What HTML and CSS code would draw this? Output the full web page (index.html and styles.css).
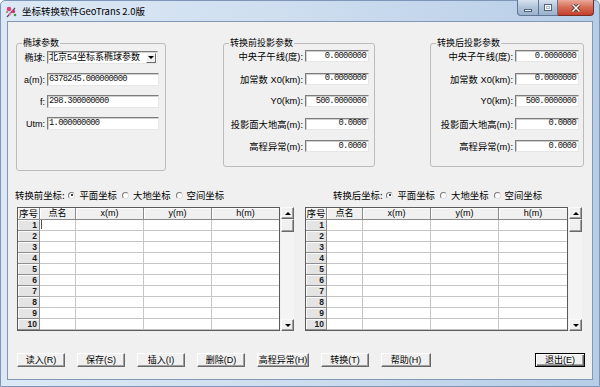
FILE: index.html
```html
<!DOCTYPE html>
<html lang="zh-CN">
<head>
<meta charset="utf-8">
<title>坐标转换软件GeoTrans 2.0版</title>
<link rel="stylesheet" href="styles.css">
</head>
<body>
<div class="window">
  <div class="titlebar">
    <svg class="appicon" width="13" height="13" viewBox="0 0 13 13">
      <path d="M2 12 L10 3" stroke="#5a4a5a" stroke-width="1.2"/>
      <circle cx="4" cy="4" r="2.3" fill="#e2407c"/>
      <circle cx="8.5" cy="6.5" r="1.7" fill="#d4306c"/>
      <circle cx="5" cy="9" r="1.4" fill="#f27aa8"/>
      <circle cx="10" cy="10" r="1.3" fill="#3d9a44"/>
      <circle cx="2" cy="7" r="1" fill="#4aa850"/>
    </svg>
    <span class="title">坐标转换软件GeoTrans 2.0版</span>
    <div class="caption">
      <div class="cbtn min"><span class="g-min"></span></div>
      <div class="cbtn max"><span class="g-max"></span></div>
      <div class="cbtn close">
        <svg width="10" height="8" viewBox="0 0 10 8"><path d="M1.5 0.5 L8.5 7.5 M8.5 0.5 L1.5 7.5" stroke="#4a1a14" stroke-width="3"/><path d="M1.5 0.5 L8.5 7.5 M8.5 0.5 L1.5 7.5" stroke="#fff" stroke-width="1.6"/></svg>
      </div>
    </div>
  </div>

  <div class="client">
    <div class="groups">
      <fieldset class="group g1">
        <legend>椭球参数</legend>
        <div class="rows1">
          <div class="row1"><span class="lbl1">椭球:</span><div class="combo"><span class="ctext">北京54坐标系椭球参数</span><span class="drop"><i class="tri-down"></i></span></div></div>
          <div class="row1"><span class="lbl1">a(m):</span><div class="field wide">6378245.000000000</div></div>
          <div class="row1"><span class="lbl1">f:</span><div class="field wide">298.300000000</div></div>
          <div class="row1"><span class="lbl1">Utm:</span><div class="field wide">1.000000000</div></div>
        </div>
      </fieldset>

      <fieldset class="group g2">
        <legend>转换前投影参数</legend>
        <div class="rows2">
          <div class="row2"><span class="lbl2">中央子午线(度):</span><div class="field num">0.0000000</div></div>
          <div class="row2"><span class="lbl2">加常数 X0(km):</span><div class="field num">0.0000000</div></div>
          <div class="row2"><span class="lbl2">Y0(km):</span><div class="field num">500.0000000</div></div>
          <div class="row2"><span class="lbl2">投影面大地高(m):</span><div class="field num">0.0000</div></div>
          <div class="row2"><span class="lbl2">高程异常(m):</span><div class="field num">0.0000</div></div>
        </div>
      </fieldset>

      <fieldset class="group g3">
        <legend>转换后投影参数</legend>
        <div class="rows2">
          <div class="row2"><span class="lbl2">中央子午线(度):</span><div class="field num">0.0000000</div></div>
          <div class="row2"><span class="lbl2">加常数 X0(km):</span><div class="field num">0.0000000</div></div>
          <div class="row2"><span class="lbl2">Y0(km):</span><div class="field num">500.0000000</div></div>
          <div class="row2"><span class="lbl2">投影面大地高(m):</span><div class="field num">0.0000</div></div>
          <div class="row2"><span class="lbl2">高程异常(m):</span><div class="field num">0.0000</div></div>
        </div>
      </fieldset>
    </div>

    <div class="coords">
      <div class="panel pl">
        <div class="radios">
          <span class="rcap">转换前坐标:</span>
          <span class="radio"><i class="dot on"></i>平面坐标</span>
          <span class="radio"><i class="dot"></i>大地坐标</span>
          <span class="radio"><i class="dot"></i>空间坐标</span>
        </div>
        <div class="gridbox">
          <div class="grid gl">
            <div class="h">序号</div><div class="h">点名</div><div class="h">x(m)</div><div class="h">y(m)</div><div class="h">h(m)</div>
            <div class="rh">1</div><div class="d"><b class="caret"></b></div><div class="d"></div><div class="d"></div><div class="d"></div>
            <div class="rh">2</div><div class="d"></div><div class="d"></div><div class="d"></div><div class="d"></div>
            <div class="rh">3</div><div class="d"></div><div class="d"></div><div class="d"></div><div class="d"></div>
            <div class="rh">4</div><div class="d"></div><div class="d"></div><div class="d"></div><div class="d"></div>
            <div class="rh">5</div><div class="d"></div><div class="d"></div><div class="d"></div><div class="d"></div>
            <div class="rh">6</div><div class="d"></div><div class="d"></div><div class="d"></div><div class="d"></div>
            <div class="rh">7</div><div class="d"></div><div class="d"></div><div class="d"></div><div class="d"></div>
            <div class="rh">8</div><div class="d"></div><div class="d"></div><div class="d"></div><div class="d"></div>
            <div class="rh">9</div><div class="d"></div><div class="d"></div><div class="d"></div><div class="d"></div>
            <div class="rh">10</div><div class="d"></div><div class="d"></div><div class="d"></div><div class="d"></div>
          </div>
          <div class="vscroll">
            <div class="sbtn"><i class="tri-up"></i></div>
            <div class="thumb"></div>
            <div class="track"></div>
            <div class="sbtn"><i class="tri-down"></i></div>
          </div>
        </div>
      </div>

      <div class="panel pr">
        <div class="radios rr">
          <span class="rcap">转换后坐标:</span>
          <span class="radio"><i class="dot on"></i>平面坐标</span>
          <span class="radio"><i class="dot"></i>大地坐标</span>
          <span class="radio"><i class="dot"></i>空间坐标</span>
        </div>
        <div class="gridbox">
          <div class="grid gr">
            <div class="h">序号</div><div class="h">点名</div><div class="h">x(m)</div><div class="h">y(m)</div><div class="h">h(m)</div>
            <div class="rh">1</div><div class="d"></div><div class="d"></div><div class="d"></div><div class="d"></div>
            <div class="rh">2</div><div class="d"></div><div class="d"></div><div class="d"></div><div class="d"></div>
            <div class="rh">3</div><div class="d"></div><div class="d"></div><div class="d"></div><div class="d"></div>
            <div class="rh">4</div><div class="d"></div><div class="d"></div><div class="d"></div><div class="d"></div>
            <div class="rh">5</div><div class="d"></div><div class="d"></div><div class="d"></div><div class="d"></div>
            <div class="rh">6</div><div class="d"></div><div class="d"></div><div class="d"></div><div class="d"></div>
            <div class="rh">7</div><div class="d"></div><div class="d"></div><div class="d"></div><div class="d"></div>
            <div class="rh">8</div><div class="d"></div><div class="d"></div><div class="d"></div><div class="d"></div>
            <div class="rh">9</div><div class="d"></div><div class="d"></div><div class="d"></div><div class="d"></div>
            <div class="rh">10</div><div class="d"></div><div class="d"></div><div class="d"></div><div class="d"></div>
          </div>
          <div class="vscroll">
            <div class="sbtn"><i class="tri-up"></i></div>
            <div class="thumb"></div>
            <div class="track"></div>
            <div class="sbtn"><i class="tri-down"></i></div>
          </div>
        </div>
      </div>
    </div>

    <div class="buttons">
      <div class="btn">读入(R)</div>
      <div class="btn">保存(S)</div>
      <div class="btn">插入(I)</div>
      <div class="btn">删除(D)</div>
      <div class="btn b5">高程异常(H)</div>
      <div class="btn">转换(T)</div>
      <div class="btn b7">帮助(H)</div>
      <div class="btn def">退出(E)</div>
    </div>
  </div>
</div>
</body>
</html>
```

FILE: styles.css
```css
* { box-sizing: border-box; }
html, body { margin: 0; padding: 0; }
body {
  width: 600px;
  height: 387px;
  overflow: hidden;
  background: #ffffff;
  font-family: "Liberation Sans", "Noto Sans CJK SC", sans-serif;
  font-size: 9px;
  color: #000;
}

.window {
  width: 600px;
  height: 387px;
  display: flex;
  flex-direction: column;
  border: 1px solid #7d96b8;
  border-radius: 5px 5px 0 0;
  background: linear-gradient(90deg, #dce8f5 0%, #cfdff0 45%, #b7cde7 100%);
}

/* ---------- title bar ---------- */
.titlebar {
  height: 20px;
  display: flex;
  align-items: center;
  padding-left: 4px;
}
.appicon { flex: none; margin-top: 1px; }
.title {
  margin-left: 4px;
  font-family: "Noto Sans CJK SC", sans-serif;
  font-size: 9.5px;
  line-height: 12px;
  color: #000;
}
.caption {
  display: flex;
  margin-left: auto;
  margin-right: 5px;
  align-self: flex-start;
  margin-top: -1px;
}
.cbtn {
  height: 16px;
  display: flex;
  align-items: center;
  justify-content: center;
  border: 1px solid #5f7695;
  border-top: 0;
}
.min {
  width: 21px;
  border-right: 0;
  border-radius: 0 0 0 4px;
  background: linear-gradient(#d6e2ef, #b1c3da 50%, #9cb1cc);
}
.max {
  width: 20px;
  background: linear-gradient(#d6e2ef, #b1c3da 50%, #9cb1cc);
}
.close {
  width: 36px;
  border-left: 0;
  border-color: #7b2c22;
  border-radius: 0 0 4px 0;
  background: linear-gradient(#eaa99b, #d66a54 50%, #c2402d);
}
.g-min {
  width: 8px;
  height: 3px;
  margin-top: 5px;
  background: #fff;
  border: 1px solid #4f627d;
}
.g-max {
  width: 8px;
  height: 7px;
  border: 1px solid #4f627d;
  background: #fff;
  box-shadow: inset 0 0 0 1px #fff, inset 0 0 0 2px #a9bbd3;
}

/* ---------- client ---------- */
.client {
  flex: 1;
  margin: 0 6px 6px 6px;
  border: 1px solid #8197b3;
  background: #f0f0f0;
  display: flex;
  flex-direction: column;
}

.groups {
  display: flex;
  align-items: flex-start;
  padding: 15px 0 0 8px;
}
.group {
  margin: 0;
  padding: 0;
  min-width: 0;
  border: 1px solid #bcbcbc;
  border-radius: 3px;
}
.group legend {
  margin-left: 5px;
  padding: 0 1px;
  line-height: 12px;
  font-size: 9px;
}
.g1 { width: 150px; height: 134px; }
.g2 { width: 152px; height: 130px; margin-left: 57px; }
.g3 { width: 154px; height: 130px; margin-left: 55px; }

.rows1 {
  display: flex;
  flex-direction: column;
  gap: 9px;
  padding-top: 2px;
}
.row1 {
  display: flex;
  align-items: center;
  height: 13px;
}
.lbl1 {
  width: 28px;
  margin-right: 2px;
  text-align: right;
  white-space: nowrap;
}

.rows2 {
  display: flex;
  flex-direction: column;
  gap: 10.5px;
  padding-top: 1px;
}
.g2 .row2 { padding-right: 5px; }
.g3 .row2 { padding-right: 4px; }
.row2 {
  display: flex;
  align-items: center;
  height: 12px;
}
.lbl2 {
  flex: 1;
  text-align: right;
  white-space: nowrap;
  margin-right: 2px;
  font-size: 9.3px;
}

.field {
  height: 13px;
  background: #fff;
  border: 1px solid;
  border-color: #7d7d7d #e6e6e6 #e6e6e6 #7d7d7d;
  box-shadow: inset 1px 1px 0 #cfcfcf;
  font-family: "Liberation Mono", monospace;
  font-size: 8.8px;
  letter-spacing: -0.7px;
  line-height: 11px;
  color: #111;
  display: flex;
  align-items: center;
  white-space: nowrap;
  overflow: hidden;
}
.field.wide { width: 112px; padding-left: 1px; }
.field.num {
  width: 64px;
  height: 12px;
  justify-content: flex-end;
  padding-right: 2px;
}

.combo {
  width: 111px;
  height: 13px;
  background: #fff;
  border: 1px solid;
  border-color: #7d7d7d #e6e6e6 #e6e6e6 #7d7d7d;
  box-shadow: inset 1px 1px 0 #cfcfcf;
  display: flex;
  align-items: center;
  padding-left: 1px;
  padding-right: 1px;
}
.ctext {
  flex: 1;
  white-space: nowrap;
  line-height: 11px;
  font-size: 9px;
}
.drop {
  width: 10px;
  height: 10px;
  background: #f0f0f0;
  border: 1px solid;
  border-color: #fff #696969 #696969 #fff;
  display: flex;
  align-items: center;
  justify-content: center;
}
.tri-down {
  display: block;
  width: 0;
  height: 0;
  border-left: 3px solid transparent;
  border-right: 3px solid transparent;
  border-top: 3px solid #000;
}
.tri-up {
  display: block;
  width: 0;
  height: 0;
  border-left: 3px solid transparent;
  border-right: 3px solid transparent;
  border-bottom: 3px solid #000;
}

/* ---------- coordinate panels ---------- */
.coords {
  display: flex;
  margin-top: 18px;
  padding-left: 7px;
  gap: 11px;
}
.panel { display: flex; flex-direction: column; }
.radios {
  display: flex;
  align-items: center;
  height: 12px;
  margin-bottom: 6px;
  font-family: "Noto Sans CJK SC", sans-serif;
  font-size: 9.4px;
  line-height: 12px;
  white-space: nowrap;
}
.rr { padding-left: 28px; }
.rcap { margin-right: 4px; }
.radio {
  display: flex;
  align-items: center;
  margin-right: 5px;
}
.dot {
  display: block;
  width: 7px;
  height: 7px;
  margin-right: 4px;
  border-radius: 50%;
  background: #fff;
  border: 1px solid;
  border-color: #7a7a7a #e0e0e0 #e0e0e0 #7a7a7a;
  position: relative;
}
.dot.on::after {
  content: "";
  position: absolute;
  left: 1.5px;
  top: 1.5px;
  width: 2px;
  height: 2px;
  border-radius: 50%;
  background: #000;
}

.pl .gridbox { margin-left: 2px; }
.gridbox {
  display: flex;
  height: 124px;
  gap: 1px;
}
.grid {
  display: grid;
  grid-template-rows: 12px repeat(10, 11px);
  border: 1px solid #5a5a5a;
  background: #fff;
}
.gl { grid-template-columns: 22px 36px 68px 68px 67px; }
.gr { grid-template-columns: 21px 36px 68px 68px 68px; }
.grid > div { overflow: hidden; }
.grid > div:nth-child(5n) { border-right: 0 !important; }

.h {
  background: #f0f0f0;
  border-right: 1px solid #8a8a8a;
  border-bottom: 1px solid #8a8a8a;
  box-shadow: inset 1px 1px 0 #fff;
  text-align: center;
  font-size: 9px;
  line-height: 11px;
  white-space: nowrap;
}
.gl .h:first-child, .gr .h:first-child { font-size: 9.5px; }
.rh {
  background: #e4e4e4;
  border-right: 1px solid #8a8a8a;
  border-bottom: 1px solid #8e8e8e;
  box-shadow: inset 1px 1px 0 #fbfbfb;
  text-align: right;
  padding-right: 2px;
  font-weight: bold;
  font-size: 8.5px;
  line-height: 10px;
  color: #1a1a1a;
}
.d {
  background: #fff;
  border-right: 1px solid #c6c6c6;
  border-bottom: 1px solid #c6c6c6;
}
.caret {
  display: block;
  width: 1px;
  height: 9px;
  margin: 0 0 0 1px;
  background: #505050;
}

.vscroll {
  width: 13px;
  display: flex;
  flex-direction: column;
  background: #ececec;
}
.sbtn {
  height: 12px;
  background: #f0f0f0;
  border: 1px solid;
  border-color: #fafafa #696969 #696969 #fafafa;
  box-shadow: inset -1px -1px 0 #a0a0a0;
  display: flex;
  align-items: center;
  justify-content: center;
}
.thumb {
  height: 13px;
  background: #f0f0f0;
  border: 1px solid;
  border-color: #fafafa #696969 #696969 #fafafa;
  box-shadow: inset -1px -1px 0 #a0a0a0;
}
.track { flex: 1; background: #f4f4f4; }

/* ---------- buttons ---------- */
.buttons {
  display: flex;
  margin-top: 22px;
  padding: 0 7px 0 9px;
  gap: 12px;
}
.btn {
  width: 48px;
  height: 14px;
  background: #f0f0f0;
  border: 1px solid;
  border-color: #fff #696969 #696969 #fff;
  box-shadow: inset -1px -1px 0 #a0a0a0;
  display: flex;
  align-items: center;
  justify-content: center;
  font-size: 9px;
  line-height: 12px;
  white-space: nowrap;
}
.btn.b5 { width: 52px; }
.btn.b7 { width: 50px; }
.btn.def {
  width: 50px;
  margin-left: auto;
  border-color: #000;
  box-shadow: inset 1px 1px 0 #fff, inset -1px -1px 0 #696969, inset -2px -2px 0 #a0a0a0;
}
```
